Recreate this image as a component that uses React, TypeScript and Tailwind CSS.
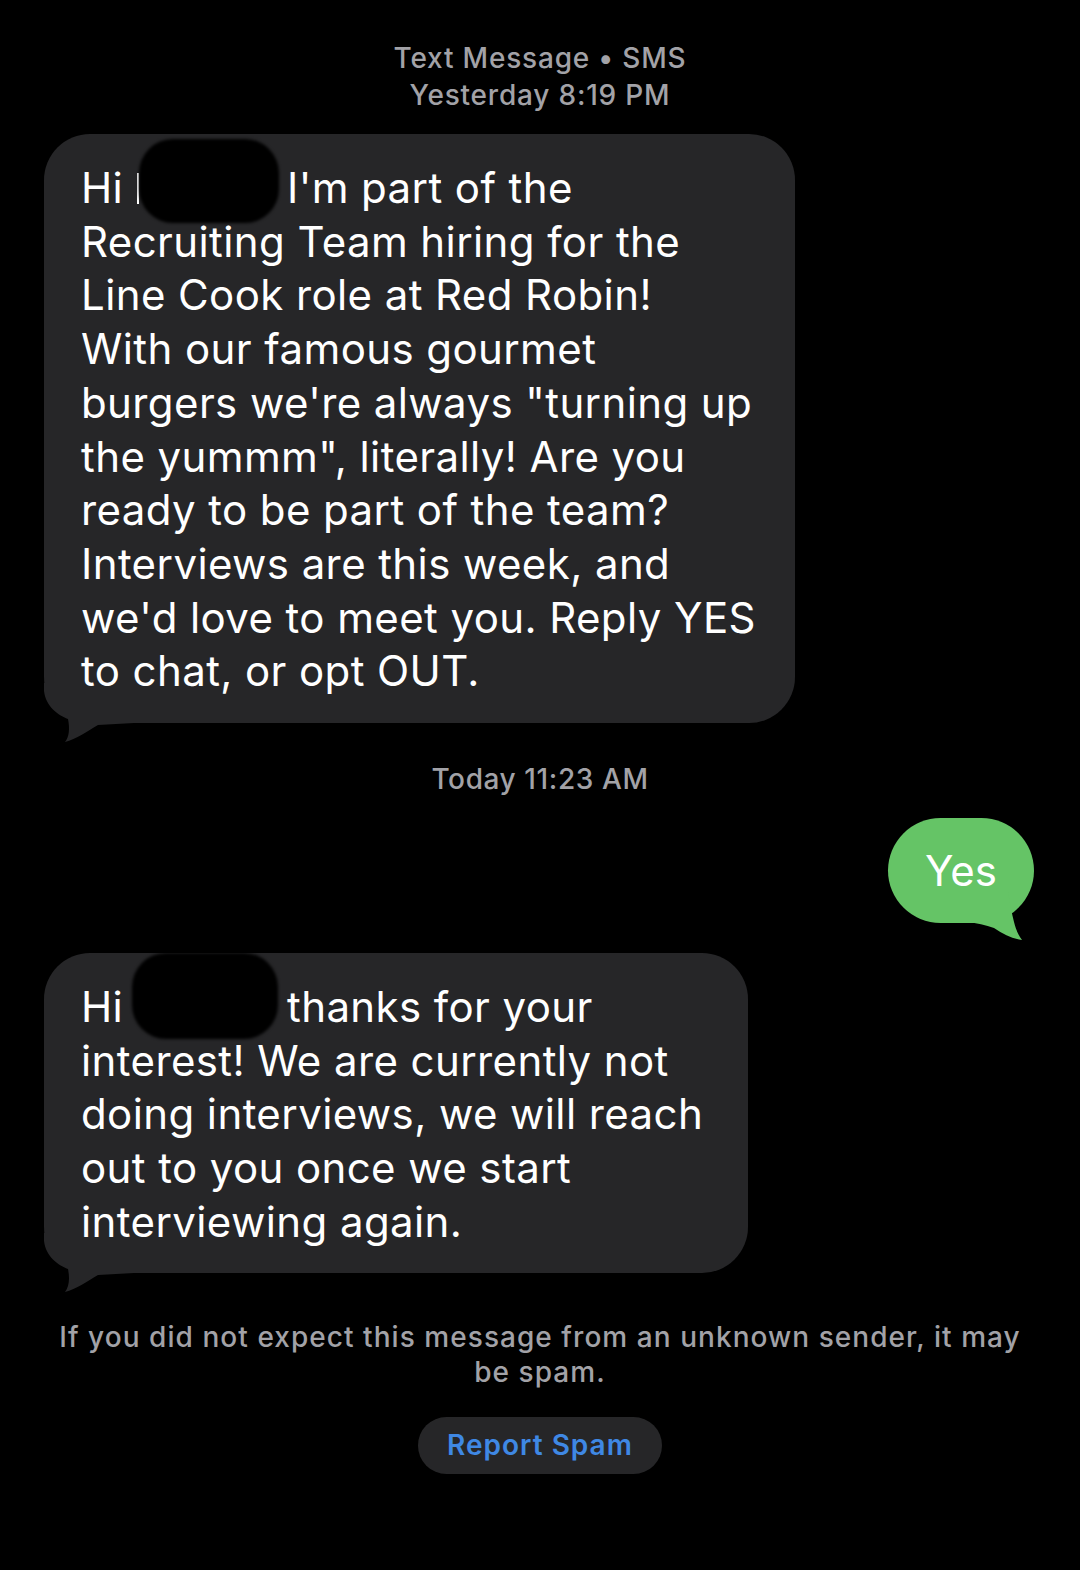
import React from "react";

const GrayTail = () => (
  <svg
    className="absolute left-0 bottom-[-22px]"
    width="90"
    height="62"
    viewBox="0 0 90 62"
  >
    <path
      d="M0 0 L0 8 C2 24 14 32 24 36 C26 46 25 54 21 59 C32 56 44 48 54 42 L90 40 L90 0 Z"
      fill="#262628"
    />
  </svg>
);

const Blob = ({ className }: { className: string }) => (
  <div className={"absolute bg-black rounded-[34px] blur-[1.5px] " + className} />
);

export default function App() {
  const b1 = [
    "Recruiting Team hiring for the",
    "Line Cook role at Red Robin!",
    "With our famous gourmet",
    "burgers we're always \"turning up",
    "the yummm\", literally! Are you",
    "ready to be part of the team?",
    "Interviews are this week, and",
    "we'd love to meet you. Reply YES",
    "to chat, or opt OUT.",
  ];
  const b2 = [
    "interest! We are currently not",
    "doing interviews, we will reach",
    "out to you once we start",
    "interviewing again.",
  ];
  return (
    <div className="w-[1080px] h-[1570px] bg-black flex flex-col font-['Inter','Noto_Sans',sans-serif] text-white">
      <div className="pt-[40px] text-center text-[28px] leading-[37px] text-[#a2a2a7] font-medium tracking-[0.8px]">
        <div>Text Message • SMS</div>
        <div>Yesterday 8:19 PM</div>
      </div>

      <div className="relative ml-[44px] mt-[20px] w-[751px] bg-[#262628] rounded-[46px] pl-[37px] pt-[27px] pb-[25px] text-[42px] leading-[53.7px] tracking-[0.4px]">
        <div className="relative z-10 whitespace-nowrap">
          <span className="inline-block w-[206px]">Hi</span>I'm part of the
        </div>
        {b1.map((l) => (
          <div key={l} className="relative z-10 whitespace-nowrap">
            {l}
          </div>
        ))}
        <div className="absolute left-[93px] top-[39px] w-[2px] h-[31px] bg-white z-10" />
        <Blob className="left-[95px] top-[5px] w-[140px] h-[84px] z-20" />
        <GrayTail />
      </div>

      <div className="mt-[38px] text-center text-[28px] leading-[36px] text-[#a2a2a7] font-medium tracking-[0.6px]">
        Today 11:23 AM
      </div>

      <div className="mt-[21px] flex justify-end pr-[46px]">
        <div className="relative w-[146px] h-[105px] rounded-full bg-[#65c466] flex items-center justify-center text-[42px] text-white">
          <span className="relative z-10">Yes</span>
          <svg
            className="absolute right-[6px] bottom-[-19px]"
            width="60"
            height="50"
            viewBox="0 0 60 50"
          >
            <path
              d="M0 0 L40 0 C42 12 44 22 46 30 C48 38 50 42 54 48 C46 47 36 43 26 36 C18 33 8 31 0 30 Z"
              fill="#65c466"
            />
          </svg>
        </div>
      </div>

      <div className="relative ml-[44px] mt-[30px] w-[704px] bg-[#262628] rounded-[46px] pl-[37px] pt-[27px] pb-[24px] text-[42px] leading-[53.7px] tracking-[0.4px]">
        <div className="relative z-10 whitespace-nowrap">
          <span className="inline-block w-[206px]">Hi</span>thanks for your
        </div>
        {b2.map((l) => (
          <div key={l} className="relative z-10 whitespace-nowrap">
            {l}
          </div>
        ))}
        <Blob className="left-[88px] top-[0px] w-[146px] h-[86px] z-20" />
        <GrayTail />
      </div>

      <div className="mt-[47px] text-center text-[28px] leading-[35px] text-[#a2a2a7] font-medium tracking-[1.05px] whitespace-nowrap">
        If you did not expect this message from an unknown sender, it may
        <br />
        be spam.
      </div>

      <div className="mt-[27px] flex justify-center">
        <div className="w-[244px] h-[57px] rounded-full bg-[#262628] flex items-center justify-center text-[28px] font-semibold text-[#3f88e4] tracking-[1px]">
          Report Spam
        </div>
      </div>
    </div>
  );
}
